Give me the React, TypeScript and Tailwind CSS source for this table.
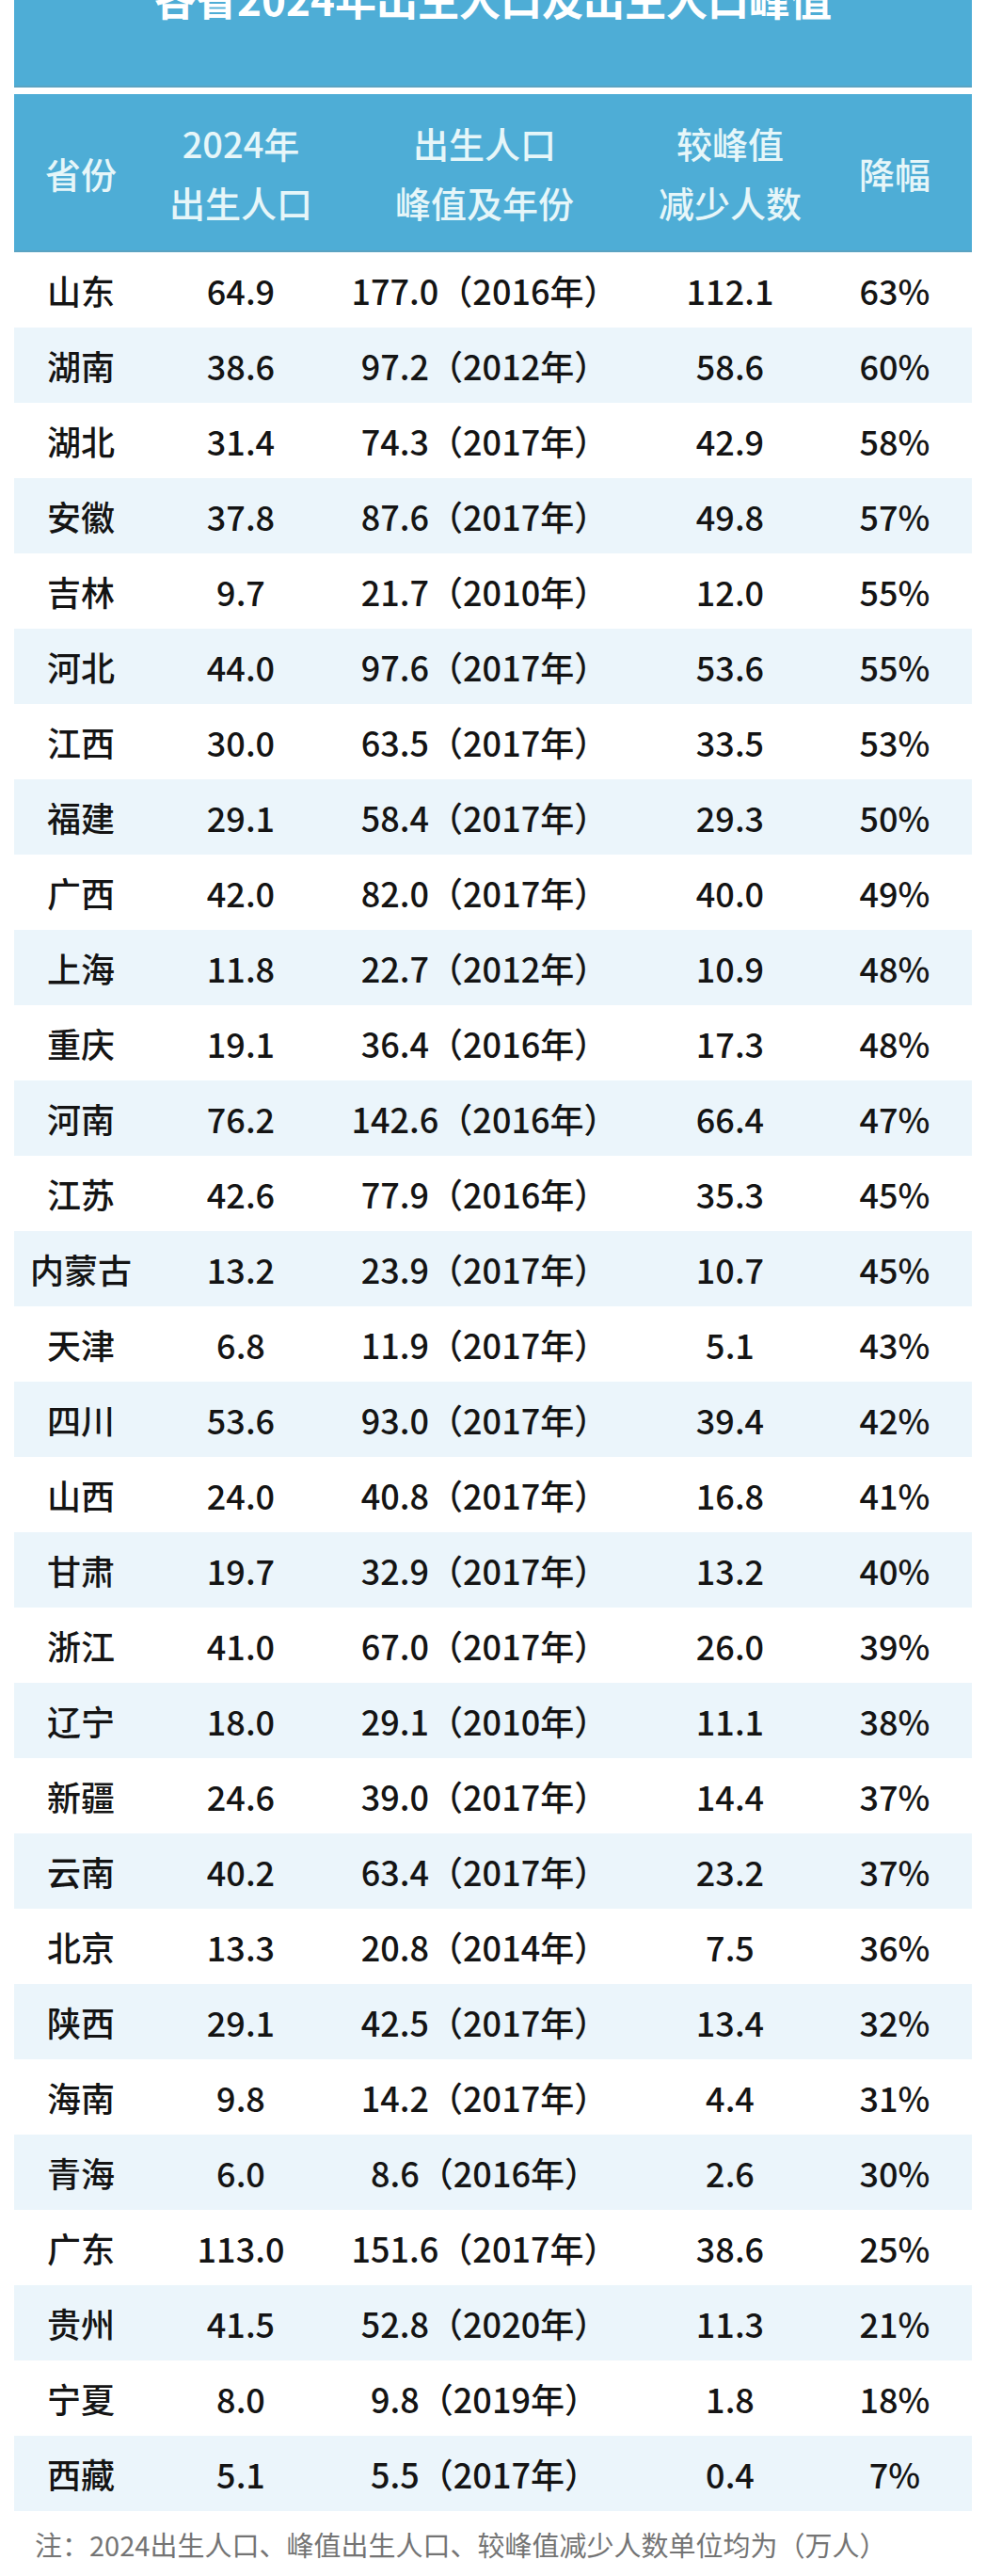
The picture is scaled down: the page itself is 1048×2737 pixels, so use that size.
import React from "react";

type Row = {
  province: string;
  births2024: string;
  peak: string;
  peakYear: string;
  drop: string;
  pct: string;
};

const rows: Row[] = [
  { province: "山东", births2024: "64.9", peak: "177.0", peakYear: "2016", drop: "112.1", pct: "63%" },
  { province: "湖南", births2024: "38.6", peak: "97.2", peakYear: "2012", drop: "58.6", pct: "60%" },
  { province: "湖北", births2024: "31.4", peak: "74.3", peakYear: "2017", drop: "42.9", pct: "58%" },
  { province: "安徽", births2024: "37.8", peak: "87.6", peakYear: "2017", drop: "49.8", pct: "57%" },
  { province: "吉林", births2024: "9.7", peak: "21.7", peakYear: "2010", drop: "12.0", pct: "55%" },
  { province: "河北", births2024: "44.0", peak: "97.6", peakYear: "2017", drop: "53.6", pct: "55%" },
  { province: "江西", births2024: "30.0", peak: "63.5", peakYear: "2017", drop: "33.5", pct: "53%" },
  { province: "福建", births2024: "29.1", peak: "58.4", peakYear: "2017", drop: "29.3", pct: "50%" },
  { province: "广西", births2024: "42.0", peak: "82.0", peakYear: "2017", drop: "40.0", pct: "49%" },
  { province: "上海", births2024: "11.8", peak: "22.7", peakYear: "2012", drop: "10.9", pct: "48%" },
  { province: "重庆", births2024: "19.1", peak: "36.4", peakYear: "2016", drop: "17.3", pct: "48%" },
  { province: "河南", births2024: "76.2", peak: "142.6", peakYear: "2016", drop: "66.4", pct: "47%" },
  { province: "江苏", births2024: "42.6", peak: "77.9", peakYear: "2016", drop: "35.3", pct: "45%" },
  { province: "内蒙古", births2024: "13.2", peak: "23.9", peakYear: "2017", drop: "10.7", pct: "45%" },
  { province: "天津", births2024: "6.8", peak: "11.9", peakYear: "2017", drop: "5.1", pct: "43%" },
  { province: "四川", births2024: "53.6", peak: "93.0", peakYear: "2017", drop: "39.4", pct: "42%" },
  { province: "山西", births2024: "24.0", peak: "40.8", peakYear: "2017", drop: "16.8", pct: "41%" },
  { province: "甘肃", births2024: "19.7", peak: "32.9", peakYear: "2017", drop: "13.2", pct: "40%" },
  { province: "浙江", births2024: "41.0", peak: "67.0", peakYear: "2017", drop: "26.0", pct: "39%" },
  { province: "辽宁", births2024: "18.0", peak: "29.1", peakYear: "2010", drop: "11.1", pct: "38%" },
  { province: "新疆", births2024: "24.6", peak: "39.0", peakYear: "2017", drop: "14.4", pct: "37%" },
  { province: "云南", births2024: "40.2", peak: "63.4", peakYear: "2017", drop: "23.2", pct: "37%" },
  { province: "北京", births2024: "13.3", peak: "20.8", peakYear: "2014", drop: "7.5", pct: "36%" },
  { province: "陕西", births2024: "29.1", peak: "42.5", peakYear: "2017", drop: "13.4", pct: "32%" },
  { province: "海南", births2024: "9.8", peak: "14.2", peakYear: "2017", drop: "4.4", pct: "31%" },
  { province: "青海", births2024: "6.0", peak: "8.6", peakYear: "2016", drop: "2.6", pct: "30%" },
  { province: "广东", births2024: "113.0", peak: "151.6", peakYear: "2017", drop: "38.6", pct: "25%" },
  { province: "贵州", births2024: "41.5", peak: "52.8", peakYear: "2020", drop: "11.3", pct: "21%" },
  { province: "宁夏", births2024: "8.0", peak: "9.8", peakYear: "2019", drop: "1.8", pct: "18%" },
  { province: "西藏", births2024: "5.1", peak: "5.5", peakYear: "2017", drop: "0.4", pct: "7%" },
];

const cols = "grid grid-cols-[142px_198px_320px_202px_156px]";

export default function App() {
  return (
    <div className="w-[1048px] h-[2737px] overflow-hidden bg-white px-[15px] font-['Noto_Sans_CJK_SC','Noto_Sans',sans-serif]">
      {/* title band, text runs off the top */}
      <div className="h-[93px] bg-[#4eadd6] border-b-2 border-[#5aa3c2] flex justify-center">
        <h1 className="mt-[-24px] text-[44px] leading-[44px] font-bold text-white">
          各省2024年出生人口及出生人口峰值
        </h1>
      </div>

      {/* column headers */}
      <div className={`${cols} mt-[7px] h-[168px] items-center bg-[#4eadd6] border-b-2 border-[#5aa3c2] text-[38px] leading-[63px] font-medium text-[#e6f6f9] text-center`}>
        <div>省份</div>
        <div>
          <div>2024年</div>
          <div>出生人口</div>
        </div>
        <div>
          <div>出生人口</div>
          <div>峰值及年份</div>
        </div>
        <div>
          <div>较峰值</div>
          <div>减少人数</div>
        </div>
        <div className="pr-[8px]">降幅</div>
      </div>

      <div>
        {rows.map((r, i) => (
          <div
            key={r.province}
            className={`${cols} h-[80px] items-center text-center text-[36px] font-medium text-[#141414] ${i % 2 === 1 ? "bg-[#ebf5fb]" : "bg-white"}`}
          >
            <div>{r.province}</div>
            <div>{r.births2024}</div>
            <div>
              {r.peak}（{r.peakYear}年）
            </div>
            <div>{r.drop}</div>
            <div className="pr-[8px]">{r.pct}</div>
          </div>
        ))}
      </div>

      <p className="mt-[15px] pl-[22px] text-[29px] leading-[40px] text-[#747474]">
        注：2024出生人口、峰值出生人口、较峰值减少人数单位均为（万人）
      </p>
    </div>
  );
}
